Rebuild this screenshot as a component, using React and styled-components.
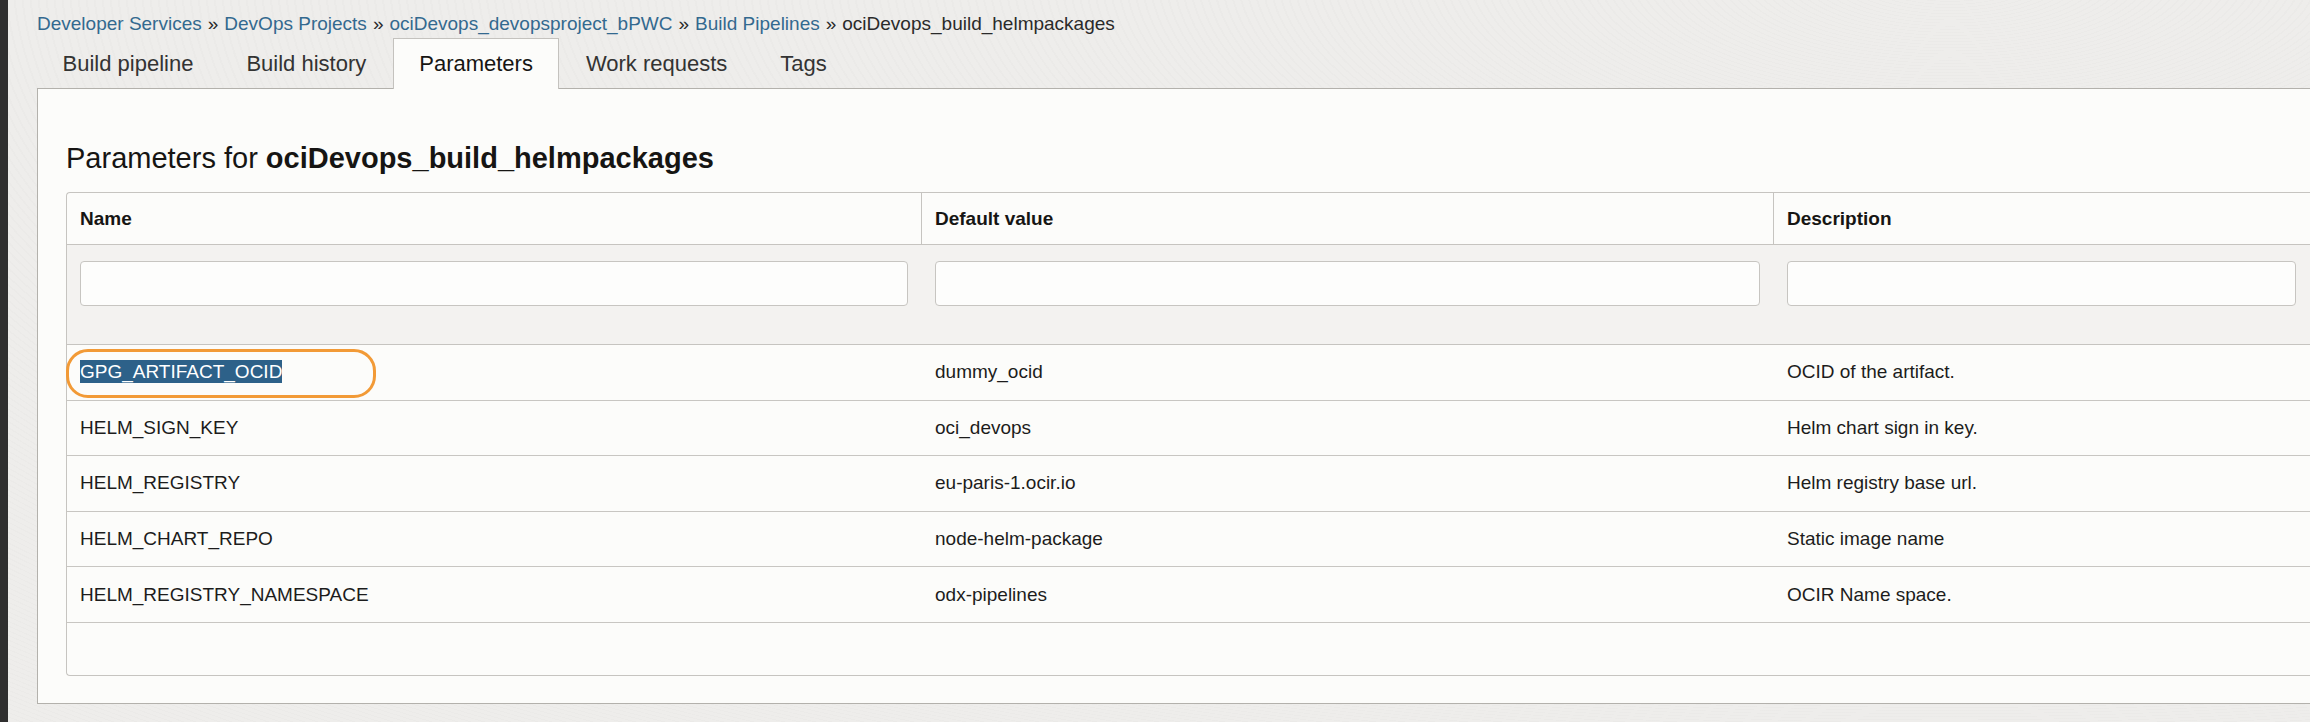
import React from 'react'
import { styled, createGlobalStyle } from 'styled-components'

const GlobalStyle = createGlobalStyle`
    html, body {
        margin: 0;
        padding: 0;
        background: #eeedeb;
    }
    body {
        font-family: "Liberation Sans", Arial, sans-serif;
        color: #161513;
    }
`;

const crumbs = [
    { label: 'Developer Services', link: true },
    { label: 'DevOps Projects', link: true },
    { label: 'ociDevops_devopsproject_bPWC', link: true },
    { label: 'Build Pipelines', link: true },
    { label: 'ociDevops_build_helmpackages', link: false },
];

const tabs = ['Build pipeline', 'Build history', 'Parameters', 'Work requests', 'Tags'];

const params = [
    { name: 'GPG_ARTIFACT_OCID', value: 'dummy_ocid', description: 'OCID of the artifact.', selected: true },
    { name: 'HELM_SIGN_KEY', value: 'oci_devops', description: 'Helm chart sign in key.' },
    { name: 'HELM_REGISTRY', value: 'eu-paris-1.ocir.io', description: 'Helm registry base url.' },
    { name: 'HELM_CHART_REPO', value: 'node-helm-package', description: 'Static image name' },
    { name: 'HELM_REGISTRY_NAMESPACE', value: 'odx-pipelines', description: 'OCIR Name space.' },
];

const App = () => {
    return (
        <Page>
            <GlobalStyle />
            <SideStrip />
            <Main>
                <Breadcrumbs>
                    {crumbs.map((c, i) => (
                        <React.Fragment key={c.label}>
                            {c.link ? <CrumbLink href="#">{c.label}</CrumbLink> : <span>{c.label}</span>}
                            {i < crumbs.length - 1 && <Separator>»</Separator>}
                        </React.Fragment>
                    ))}
                </Breadcrumbs>

                <TabBar>
                    {tabs.map((t) => (
                        <Tab key={t} $active={t === 'Parameters'}>{t}</Tab>
                    ))}
                </TabBar>

                <Panel>
                    <Heading>
                        Parameters for <strong>ociDevops_build_helmpackages</strong>
                    </Heading>

                    <Table>
                        <colgroup>
                            <col style={{ width: 855 }} />
                            <col style={{ width: 852 }} />
                            <col />
                        </colgroup>
                        <thead>
                            <tr>
                                <HeadCell $divider>Name</HeadCell>
                                <HeadCell $divider>Default value</HeadCell>
                                <HeadCell>Description</HeadCell>
                            </tr>
                            <tr>
                                <FilterCell><FilterInput type="text" /></FilterCell>
                                <FilterCell><FilterInput type="text" /></FilterCell>
                                <FilterCell><FilterInput type="text" /></FilterCell>
                            </tr>
                        </thead>
                        <tbody>
                            {params.map((p) => (
                                <tr key={p.name}>
                                    <Cell $relative={p.selected}>
                                        {p.selected ? <Selected>{p.name}</Selected> : p.name}
                                        {p.selected && <Callout />}
                                    </Cell>
                                    <Cell>{p.value}</Cell>
                                    <Cell>{p.description}</Cell>
                                </tr>
                            ))}
                            <tr>
                                <FooterCell colSpan={3} />
                            </tr>
                        </tbody>
                    </Table>
                </Panel>
            </Main>
        </Page>
    )
}

export default App

const Page = styled.div`
    display: flex;
    min-height: 722px;
    background:
        repeating-radial-gradient(ellipse at 1950px -30px, rgba(0, 0, 0, 0.012) 0 2px, transparent 2px 8px),
        #eeedeb;
    overflow: hidden;
`;

const SideStrip = styled.div`
    width: 8px;
    flex-shrink: 0;
    background: #2f2f2f;
`;

const Main = styled.main`
    flex: 1;
    min-width: 0;
    display: flex;
    flex-direction: column;
    padding: 12px 0 21px 29px;
`;

const Breadcrumbs = styled.nav`
    font-size: 19px;
    line-height: 24px;
    color: #2a2a2a;
    white-space: nowrap;
`;

const CrumbLink = styled.a`
    color: #33698f;
    text-decoration: none;
`;

const Separator = styled.span`
    margin: 0 6px;
    color: #2a2a2a;
`;

const TabBar = styled.div`
    display: flex;
    height: 50px;
    margin: 2px 0 0 -1px;
`;

const Tab = styled.div`
    display: flex;
    align-items: center;
    padding: 0 25.5px;
    font-size: 22px;
    color: ${(p) => (p.$active ? '#161513' : '#333333')};
    background: ${(p) => (p.$active ? '#fcfcfa' : 'transparent')};
    border: 1px solid ${(p) => (p.$active ? '#c4c2be' : 'transparent')};
    border-bottom: none;
    margin-bottom: -1px;
    position: relative;
    z-index: 1;
`;

const Panel = styled.section`
    background: #fcfcfa;
    border: 1px solid #b3b1ac;
    border-right: none;
    padding: 52px 0 27px 28px;
`;

const Heading = styled.h2`
    margin: 0 0 17px;
    font-size: 29px;
    line-height: 34px;
    font-weight: normal;
    color: #161513;

    strong {
        font-weight: bold;
    }
`;

const Table = styled.table`
    width: 100%;
    table-layout: fixed;
    border-collapse: separate;
    border-spacing: 0;
    border: 1px solid #c6c4c0;
    border-right: none;
    border-radius: 4px 0 0 4px;
    font-size: 19px;
    color: #1c1c1c;
`;

const HeadCell = styled.th`
    height: 52px;
    padding: 0 13px;
    box-sizing: border-box;
    text-align: left;
    font-weight: bold;
    color: #161513;
    border-bottom: 1px solid #c6c4c0;
    border-right: ${(p) => (p.$divider ? '1px solid #c6c4c0' : 'none')};
`;

const FilterCell = styled.td`
    height: 100px;
    padding: 16px 14px 38px 13px;
    background: #f3f2f0;
    border-bottom: 1px solid #c6c4c0;
    vertical-align: top;
    box-sizing: border-box;
`;

const FilterInput = styled.input`
    display: block;
    width: 100%;
    height: 45px;
    box-sizing: border-box;
    border: 1px solid #c7c5c1;
    border-radius: 4px;
    background: #fdfdfc;
    outline: none;
`;

const Cell = styled.td`
    height: 55.6px;
    padding: 0 13px;
    box-sizing: border-box;
    border-bottom: 1px solid #c8c6c2;
    white-space: nowrap;
    position: ${(p) => (p.$relative ? 'relative' : 'static')};
`;

const Selected = styled.span`
    background: #2d6189;
    color: #ffffff;
    padding: 1px 0;
`;

const Callout = styled.span`
    position: absolute;
    left: -1px;
    top: 4px;
    width: 310px;
    height: 49px;
    box-sizing: border-box;
    border: 3px solid #f29a36;
    border-radius: 22px;
    pointer-events: none;
`;

const FooterCell = styled.td`
    height: 52px;
    padding: 0;
`;
